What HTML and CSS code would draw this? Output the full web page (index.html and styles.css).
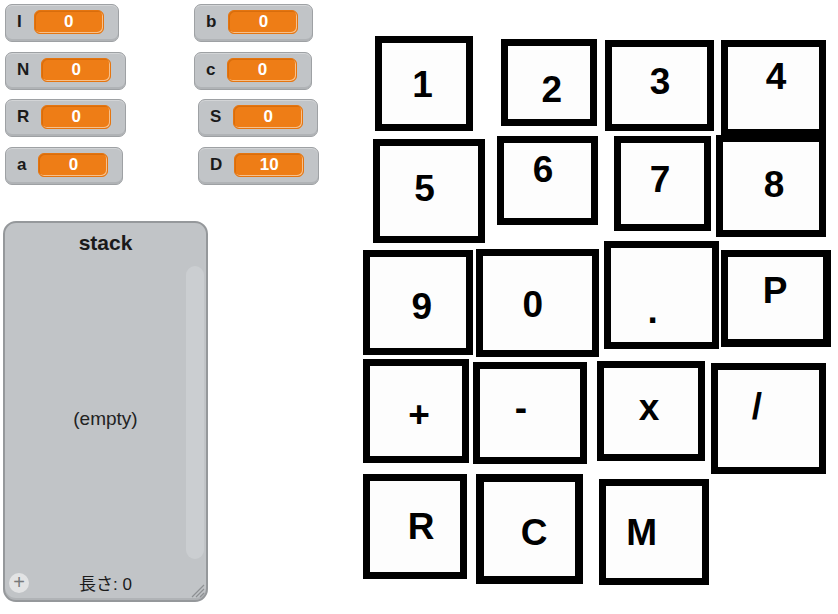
FILE: index.html
```html
<!DOCTYPE html>
<html>
<head>
<meta charset="utf-8">
<link rel="stylesheet" href="styles.css">
</head>
<body>
<div class="stage">
  <div class="panel">
    <div class="monitors">
      <div class="mon"><span class="lbl">I</span><span class="val">0</span></div>
      <div class="mon"><span class="lbl">b</span><span class="val">0</span></div>
      <div class="mon"><span class="lbl">N</span><span class="val">0</span></div>
      <div class="mon"><span class="lbl">c</span><span class="val">0</span></div>
      <div class="mon"><span class="lbl">R</span><span class="val">0</span></div>
      <div class="mon shift"><span class="lbl">S</span><span class="val">0</span></div>
      <div class="mon"><span class="lbl">a</span><span class="val">0</span></div>
      <div class="mon shift"><span class="lbl">D</span><span class="val">10</span></div>
    </div>
    <div class="list">
      <div class="list-title">stack</div>
      <div class="list-body">
        <div class="empty">(empty)</div>
        <div class="scroll"></div>
      </div>
      <div class="list-foot">
        <span class="add">+</span>
        <span class="len">長さ: 0</span>
        <svg class="resize" width="16" height="16" viewBox="0 0 16 16">
          <path d="M3 15 L15 3 M7 15 L15 7 M11 15 L15 11" stroke="#8d9093" stroke-width="1.2" fill="none"/>
        </svg>
      </div>
    </div>
  </div>

  <div class="key k1"><span>1</span></div>
  <div class="key k2"><span>2</span></div>
  <div class="key k3"><span>3</span></div>
  <div class="key k4"><span>4</span></div>
  <div class="key k5"><span>5</span></div>
  <div class="key k6"><span>6</span></div>
  <div class="key k7"><span>7</span></div>
  <div class="key k8"><span>8</span></div>
  <div class="key k9"><span>9</span></div>
  <div class="key k0"><span>0</span></div>
  <div class="key kdot"><span>.</span></div>
  <div class="key kp"><span>P</span></div>
  <div class="key kplus"><span>+</span></div>
  <div class="key kminus"><span>-</span></div>
  <div class="key kx"><span>x</span></div>
  <div class="key kdiv"><span>/</span></div>
  <div class="key kr"><span>R</span></div>
  <div class="key kc"><span>C</span></div>
  <div class="key km"><span>M</span></div>
</div>
</body>
</html>
```

FILE: styles.css
```css
html, body {
  margin: 0;
  padding: 0;
  background: #ffffff;
}

.stage {
  position: relative;
  width: 838px;
  height: 614px;
  overflow: hidden;
  background: #ffffff;
  font-family: "Liberation Sans", Arial, "Noto Sans CJK JP", sans-serif;
}

.panel {
  display: flex;
  flex-direction: column;
  align-items: flex-start;
  padding: 4px 0 0 3px;
}

.monitors {
  display: grid;
  grid-template-columns: 189px auto;
  row-gap: 9.5px;
  margin-left: 2px;
  justify-items: start;
}

.mon {
  box-sizing: border-box;
  height: 38px;
  display: flex;
  align-items: center;
  gap: 12px;
  padding: 0 14px 2px 11px;
  background: #c1c4c7;
  border: 1px solid #9ea1a4;
  border-radius: 7px;
  box-shadow: inset 0 -2px 0 #b0b3b6, inset 0 1px 0 #d3d5d7;
}

.mon.shift {
  margin-left: 4px;
}

.lbl {
  font-weight: bold;
  font-size: 17px;
  color: #1a1a1a;
}

.val {
  box-sizing: border-box;
  width: 70px;
  height: 24px;
  line-height: 22px;
  text-align: center;
  background: #ee7d16;
  border: 1px solid #e57510;
  border-radius: 6px;
  box-shadow: inset -1px -1px 0 #f6c08c, inset 1px 1px 0 #d86d0c;
  color: #ffffff;
  font-weight: bold;
  font-size: 17px;
}

.list {
  box-sizing: border-box;
  margin-top: 36px;
  width: 205px;
  height: 381px;
  background: #c1c4c7;
  border: 2px solid #95989b;
  border-radius: 13px;
  display: flex;
  flex-direction: column;
  box-shadow: inset 0 -2px 0 #b0b3b6;
}

.list-title {
  text-align: center;
  font-weight: bold;
  font-size: 21px;
  color: #1a1a1a;
  padding-top: 8px;
  height: 27px;
}

.list-body {
  flex: 1;
  display: grid;
  padding: 8px 2px 11px 2px;
}

.empty,
.scroll {
  grid-area: 1 / 1;
}

.empty {
  align-self: center;
  justify-self: center;
  margin-top: 14px;
  font-size: 19px;
  color: #222222;
}

.scroll {
  justify-self: end;
  width: 18px;
  background: #cbced1;
  border-radius: 9px;
}

.list-foot {
  height: 26px;
  display: grid;
  grid-template-columns: 1fr;
  align-items: center;
  padding: 0 0 4px 0;
}

.add,
.len,
.resize {
  grid-area: 1 / 1;
}

.add {
  justify-self: start;
  margin-left: 4px;
  width: 20px;
  height: 20px;
  border-radius: 50%;
  background: #e2e3e4;
  color: #77797b;
  font-size: 20px;
  line-height: 19px;
  text-align: center;
}

.len {
  justify-self: center;
  font-size: 17px;
  color: #1a1a1a;
  font-family: "Liberation Sans", "Noto Sans CJK JP", sans-serif;
}

.resize {
  justify-self: end;
  align-self: end;
  margin: 0 1px -2px 0;
}

/* key sprites on the stage canvas */
.key {
  position: absolute;
  box-sizing: border-box;
  border: 7px solid #000000;
  background: #fdfdfd;
}

.key span {
  position: absolute;
  transform: translate(-50%, -50%);
  margin: -7px 0 0 -7px;
  font-weight: bold;
  font-size: 37px;
  line-height: 1;
  color: #000000;
  white-space: nowrap;
}

.k1 { left: 375px; top: 36px; width: 98px; height: 95px; }
.k1 span { left: 47.5px; top: 48px; }

.k2 { left: 501px; top: 39px; width: 96px; height: 87px; }
.k2 span { left: 50.7px; top: 50.3px; }

.k3 { left: 605px; top: 40px; width: 109px; height: 91px; }
.k3 span { left: 55px; top: 41px; }

.k4 { left: 721px; top: 40px; width: 105px; height: 96px; }
.k4 span { left: 55px; top: 36px; }

.k5 { left: 373px; top: 139px; width: 112px; height: 104px; }
.k5 span { left: 51.5px; top: 49px; }

.k6 { left: 497px; top: 136px; width: 101px; height: 89px; }
.k6 span { left: 46px; top: 33px; }

.k7 { left: 614px; top: 136px; width: 97px; height: 95px; }
.k7 span { left: 46px; top: 43px; }

.k8 { left: 716px; top: 135px; width: 110px; height: 102px; }
.k8 span { left: 58px; top: 49px; }

.k9 { left: 363px; top: 250px; width: 110px; height: 105px; }
.k9 span { left: 58.7px; top: 56px; }

.k0 { left: 476px; top: 249px; width: 123px; height: 108px; }
.k0 span { left: 56.7px; top: 55px; }

.kdot { left: 604px; top: 241px; width: 115px; height: 108px; }
.kdot span { left: 48.7px; top: 69px; }

.kp { left: 721px; top: 250px; width: 110px; height: 97px; border-width: 7px 8px 8px 7px; }
.kp span { left: 54px; top: 39.7px; }

.kplus { left: 363px; top: 359px; width: 106px; height: 104px; }
.kplus span { left: 56px; top: 55px; }

.kminus { left: 473px; top: 362px; width: 114px; height: 102px; }
.kminus span { left: 48px; top: 45.3px; }

.kx { left: 597px; top: 361px; width: 108px; height: 100px; }
.kx span { left: 52px; top: 45.7px; }

.kdiv { left: 711px; top: 363px; width: 115px; height: 111px; }
.kdiv span { left: 46px; top: 42.5px; }

.kr { left: 363px; top: 474px; width: 104px; height: 105px; }
.kr span { left: 58px; top: 52px; }

.kc { left: 476px; top: 474px; width: 107px; height: 110px; border-width: 8px; }
.kc span { left: 58px; top: 58px; margin: -8px 0 0 -8px; }

.km { left: 599px; top: 479px; width: 110px; height: 106px; }
.km span { left: 42.7px; top: 53px; }
```
